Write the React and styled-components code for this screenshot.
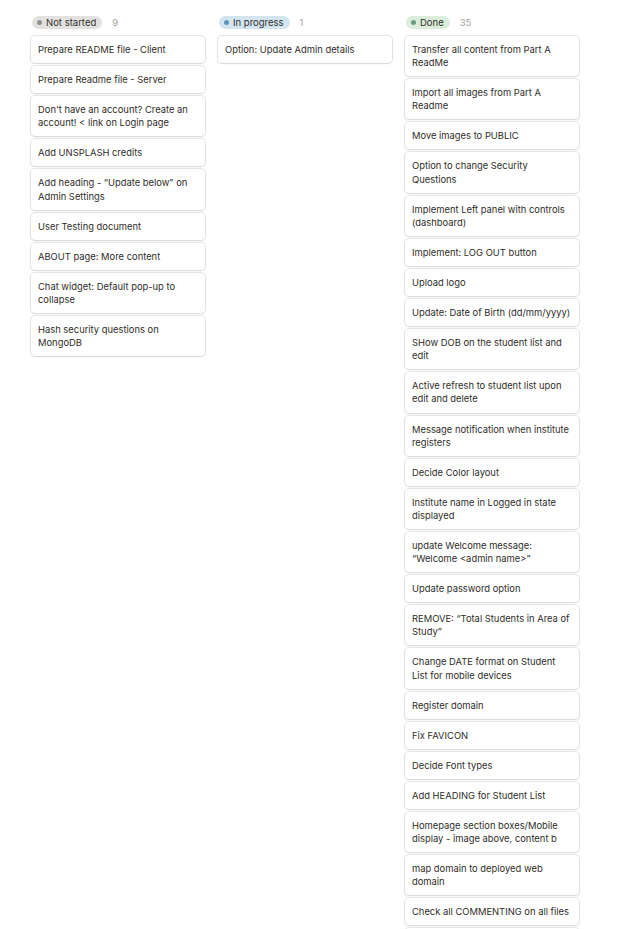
import React from 'react';
import styled, { createGlobalStyle } from 'styled-components';

const GlobalStyle = createGlobalStyle`
  html, body {
    margin: 0;
    padding: 0;
    background: #fff;
  }
  body {
    font-family: Inter, "Noto Sans", "Liberation Sans", sans-serif;
    color: #37352f;
    -webkit-font-smoothing: antialiased;
  }
`;

const Board = styled.div`
  display: grid;
  grid-template-columns: 175px 175px 175px;
  column-gap: 12px;
  align-items: start;
  padding: 15px 0 0 31px;
  width: 629px;
  height: 929px;
  box-sizing: border-box;
  overflow: hidden;
`;

const Column = styled.div`
  display: flex;
  flex-direction: column;
`;

const ColumnHeader = styled.div`
  display: flex;
  align-items: center;
  height: 14px;
  margin-bottom: 7px;
  padding-left: 1px;
`;

const Pill = styled.span`
  display: inline-flex;
  align-items: center;
  gap: 4px;
  height: 13px;
  padding: 0 6px 0 5px;
  border-radius: 7px;
  background: ${({ bg }) => bg};
  font-size: 9.5px;
  line-height: 13px;
  color: #32302c;
  white-space: nowrap;
`;

const Dot = styled.span`
  width: 5px;
  height: 5px;
  border-radius: 50%;
  background: ${({ color }) => color};
`;

const Count = styled.span`
  margin-left: 10px;
  font-size: 9.5px;
  color: #a5a4a0;
`;

const Cards = styled.div`
  display: flex;
  flex-direction: column;
  gap: 3px;
`;

const Card = styled.div`
  background: #fff;
  border-radius: 4px;
  box-shadow: 0 0 0 1px rgba(15, 15, 15, 0.1), 0 1px 2px rgba(15, 15, 15, 0.08);
  padding: 7px;
  font-size: 9.4px;
  line-height: 13.1px;
  color: #2f2d28;
  margin: 0 1px 0 0;
`;

const Line = styled.div`
  white-space: nowrap;
  overflow: hidden;
`;

const columns = [
  {
    name: 'Not started',
    bg: '#e3e2e0',
    dot: '#91918e',
    count: 9,
    cards: [
      ['Prepare README file - Client'],
      ['Prepare Readme file - Server'],
      ["Don't have an account? Create an", 'account! < link on Login page'],
      ['Add UNSPLASH credits'],
      ['Add heading - \u201cUpdate below\u201d on', 'Admin Settings'],
      ['User Testing document'],
      ['ABOUT page: More content'],
      ['Chat widget: Default pop-up to', 'collapse'],
      ['Hash security questions on', 'MongoDB'],
    ],
  },
  {
    name: 'In progress',
    bg: '#d3e5ef',
    dot: '#5b97bd',
    count: 1,
    cards: [['Option: Update Admin details']],
  },
  {
    name: 'Done',
    bg: '#dbeddb',
    dot: '#6c9b7d',
    count: 35,
    cards: [
      ['Transfer all content from Part A', 'ReadMe'],
      ['Import all images from Part A', 'Readme'],
      ['Move images to PUBLIC'],
      ['Option to change Security', 'Questions'],
      ['Implement Left panel with controls', '(dashboard)'],
      ['Implement: LOG OUT button'],
      ['Upload logo'],
      ['Update: Date of Birth (dd/mm/yyyy)'],
      ['SHow DOB on the student list and', 'edit'],
      ['Active refresh to student list upon', 'edit and delete'],
      ['Message notification when institute', 'registers'],
      ['Decide Color layout'],
      ['Institute name in Logged in state', 'displayed'],
      ['update Welcome message:', '\u201cWelcome <admin name>\u201d'],
      ['Update password option'],
      ['REMOVE: \u201cTotal Students in Area of', 'Study\u201d'],
      ['Change DATE format on Student', 'List for mobile devices'],
      ['Register domain'],
      ['Fix FAVICON'],
      ['Decide Font types'],
      ['Add HEADING for Student List'],
      ['Homepage section boxes/Mobile', 'display - image above, content b'],
      ['map domain to deployed web', 'domain'],
      ['Check all COMMENTING on all files'],
      [''],
    ],
  },
];

export default function App() {
  return (
    <>
      <GlobalStyle />
      <Board>
        {columns.map((col) => (
          <Column key={col.name}>
            <ColumnHeader>
              <Pill bg={col.bg}>
                <Dot color={col.dot} />
                {col.name}
              </Pill>
              <Count>{col.count}</Count>
            </ColumnHeader>
            <Cards>
              {col.cards.map((lines, i) => (
                <Card key={i}>
                  {lines.map((l, j) => (
                    <Line key={j}>{l || '\u00a0'}</Line>
                  ))}
                </Card>
              ))}
            </Cards>
          </Column>
        ))}
      </Board>
    </>
  );
}
